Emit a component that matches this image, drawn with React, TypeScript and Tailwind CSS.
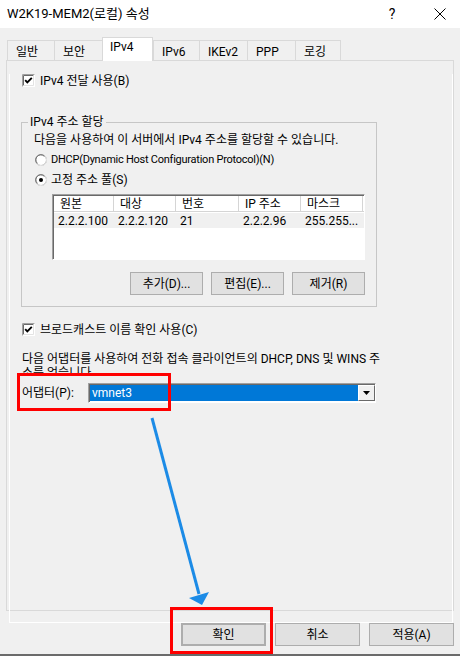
import React from 'react';

const CheckBox = () => (
  <svg width="13" height="13" viewBox="0 0 13 13" className="shrink-0">
    <rect x="0" y="0" width="13" height="13" fill="#fff" />
    <path d="M0.5 12.5 V0.5 H12.5" stroke="#a0a0a0" fill="none" />
    <path d="M1.5 11.5 V1.5 H11.5" stroke="#696969" fill="none" />
    <path d="M1.5 11.5 H11.5 V1.5" stroke="#e3e3e3" fill="none" />
    <path d="M3.2 6.2 L5.3 8.4 L9.8 3.8" stroke="#000" strokeWidth="1.9" fill="none" />
  </svg>
);

const Radio = ({ on }: { on?: boolean }) => (
  <svg width="12" height="12" viewBox="0 0 12 12" className="shrink-0">
    <circle cx="6" cy="6" r="5.5" fill="#fff" stroke="#a0a0a0" />
    <path d="M10 2.2 A5 5 0 0 1 2.2 10" stroke="#e3e3e3" fill="none" />
    <path d="M2.3 9.3 A4.5 4.5 0 0 1 9.3 2.3" stroke="#696969" fill="none" />
    {on && <circle cx="6" cy="6" r="2" fill="#000" />}
  </svg>
);

const tabs = [
  { label: '일반', w: 'w-[47px]' },
  { label: '보안', w: 'w-[48px]' },
  { label: 'IPv4', w: 'w-[51px]', active: true },
  { label: 'IPv6', w: 'w-[46px]' },
  { label: 'IKEv2', w: 'w-[48px]' },
  { label: 'PPP', w: 'w-[48px]' },
  { label: '로깅', w: 'w-[46px]', last: true },
];

const cols = [
  { h: '원본', v: '2.2.2.100', w: 'w-[60px]' },
  { h: '대상', v: '2.2.2.120', w: 'w-[62px]' },
  { h: '번호', v: '21', w: 'w-[63px]' },
  { h: 'IP 주소', v: '2.2.2.96', w: 'w-[62px]' },
  { h: '마스크', v: '255.255...', w: 'w-[62px]' },
];

const Button = ({ children, className = '' }: { children: React.ReactNode; className?: string }) => (
  <div className={`h-[23px] flex items-center justify-center bg-[#e1e1e1] border border-[#adadad] ${className}`}>
    {children}
  </div>
);

export default function App() {
  return (
    <div className="relative w-[460px] h-[656px] overflow-hidden bg-[#f0f0f0] text-[12px] leading-[14px] text-black font-['Roboto','Noto_Sans_CJK_KR',sans-serif] flex flex-col">
      {/* title bar */}
      <div className="h-[28px] bg-white flex items-center pl-[7px] shrink-0">
        <span className="text-[13px]">W2K19-MEM2(로컬) 속성</span>
        <span className="ml-auto text-[14px] w-[12px] text-center">?</span>
        <svg width="12" height="12" viewBox="0 0 12 12" className="ml-[36px] mr-[14px]">
          <path d="M0.5 0.5 L11.5 11.5 M11.5 0.5 L0.5 11.5" stroke="#000" strokeWidth="1" />
        </svg>
      </div>

      {/* tabs */}
      <div className="mt-[9px] pl-[7px] flex items-end h-[23px] shrink-0 relative z-10">
        {tabs.map((t) =>
          t.active ? (
            <div
              key={t.label}
              className={`${t.w} h-[24px] -mb-px bg-white border border-b-0 border-[#d9d9d9] pl-[7px] pt-[2px]`}
            >
              {t.label}
            </div>
          ) : (
            <div
              key={t.label}
              className={`${t.w} h-[20px] bg-[#f0f0f0] border-t border-l border-[#d9d9d9] ${t.last ? 'border-r' : ''} pl-[8px] pt-[4px]`}
            >
              {t.label}
            </div>
          )
        )}
      </div>

      {/* panel */}
      <div className="mx-[6px] h-[551px] shrink-0 border border-[#d9d9d9] bg-[#f0f0f0]">
        <div className="h-full ml-[2px] border-r border-b border-l border-white pl-[12px]">
          <div className="mt-[13px] h-[13px] flex items-center gap-[5px]">
            <CheckBox />
            <span>IPv4 전달 사용(B)</span>
          </div>

          {/* group box */}
          <fieldset className="mt-[28px] -ml-px w-[356px] border border-[#c6c6c6] pb-[11px]">
            <legend className="ml-[6px] px-[2px] leading-[14px]">IPv4 주소 할당</legend>
            <div className="mt-[4px] pl-[12px]">다음을 사용하여 이 서버에서 IPv4 주소를 할당할 수 있습니다.</div>
            <div className="mt-[6px] pl-[13px] flex items-center gap-[4px]">
              <Radio />
              <span className="text-[11px] tracking-[-0.25px]">DHCP(Dynamic Host Configuration Protocol)(N)</span>
            </div>
            <div className="mt-[6px] pl-[13px] flex items-center gap-[4px]">
              <Radio on />
              <span>고정 주소 풀(S)</span>
            </div>

            {/* list view */}
            <div className="mt-[7px] ml-[30px] w-[313px] h-[66px] border border-t-[#a0a0a0] border-l-[#a0a0a0] border-r-white border-b-white bg-white shadow-[inset_1px_1px_0_#696969] pt-px pl-px">
              <div className="flex h-[16px] bg-white border-b border-[#d5d5d5]">
                {cols.map((c) => (
                  <div key={c.h} className={`${c.w} shrink-0 border-r border-[#d5d5d5] pl-[6px] flex items-center`}>
                    {c.h}
                  </div>
                ))}
              </div>
              <div className="flex h-[15px] bg-[#f0f0f0] mt-px">
                {cols.map((c) => (
                  <div key={c.h} className={`${c.w} shrink-0 pl-[4px] flex items-center`}>
                    {c.v}
                  </div>
                ))}
              </div>
            </div>

            <div className="mt-[12px] ml-[108px] flex gap-[8px]">
              <Button className="w-[73px]">추가(D)...</Button>
              <Button className="w-[73px]">편집(E)...</Button>
              <Button className="w-[73px]">제거(R)</Button>
            </div>
          </fieldset>

          <div className="mt-[16px] h-[13px] flex items-center gap-[5px]">
            <CheckBox />
            <span>브로드캐스트 이름 확인 사용(C)</span>
          </div>

          <div className="mt-[16px] h-[21px] overflow-hidden w-[360px]">
            <div className="whitespace-nowrap">다음 어댑터를 사용하여 전화 접속 클라이언트의 DHCP, DNS 및 WINS 주</div>
            <div className="whitespace-nowrap">소를 얻습니다.</div>
          </div>

          <div className="mt-[10px] h-[20px] flex items-center">
            <span className="w-[66px] shrink-0">어댑터(P):</span>
            <div className="w-[288px] h-[20px] border border-t-[#a0a0a0] border-l-[#a0a0a0] border-r-white border-b-white bg-white shadow-[inset_1px_1px_0_#696969] flex items-stretch pt-px pl-px pb-px">
              <div className="flex-1 bg-[#0078d7] text-white flex items-center pl-[2px]">vmnet3</div>
              <div className="w-[17px] bg-[#f0f0f0] border border-t-white border-l-white border-r-[#696969] border-b-[#696969] flex items-center justify-center">
                <svg width="7" height="4" viewBox="0 0 7 4">
                  <path d="M0 0 H7 L3.5 4 Z" fill="#000" />
                </svg>
              </div>
            </div>
          </div>
        </div>
      </div>

      {/* dialog buttons */}
      <div className="mt-[12px] flex justify-end gap-[9px] pr-[6px] shrink-0">
        <Button className="w-[85px] border-2 border-[#0078d7]">확인</Button>
        <Button className="w-[85px]">취소</Button>
        <Button className="w-[85px]">적용(A)</Button>
      </div>

      <div className="mt-auto h-[2px] bg-[#6b6b6b] shrink-0" />

      {/* annotations */}
      <div className="absolute left-[17px] top-[373px] w-[154px] h-[38px] border-[3px] border-[#ff0000] pointer-events-none" />
      <div className="absolute left-[170px] top-[607px] w-[103px] h-[47px] border-[3px] border-[#ff0000] pointer-events-none" />
      <svg className="absolute inset-0 pointer-events-none" width="460" height="656" viewBox="0 0 460 656">
        <line x1="152" y1="418" x2="199" y2="594" stroke="#1c8be6" strokeWidth="3" />
        <polygon points="189,598 209,592 202,605" fill="#1c8be6" />
      </svg>
    </div>
  );
}
